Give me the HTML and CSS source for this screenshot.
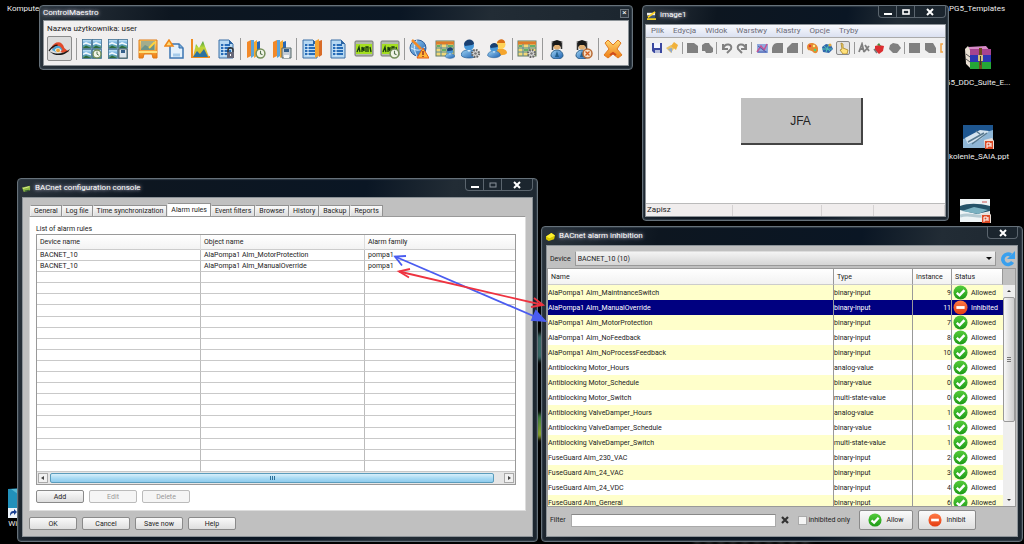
FILE: index.html
```html
<!DOCTYPE html>
<html lang="en">
<head>
<meta charset="utf-8">
<title>Desktop</title>
<link rel="stylesheet" href="styles.css">
</head>
<body>
<svg class="defs" aria-hidden="true">
  <defs>
    <linearGradient id="gBlue" x1="0" y1="0" x2="1" y2="1"><stop offset="0" stop-color="#9fd4f4"/><stop offset="1" stop-color="#1c5fb0"/></linearGradient>
    <linearGradient id="gOrange" x1="0" y1="0" x2="0" y2="1"><stop offset="0" stop-color="#ffd873"/><stop offset="1" stop-color="#ef7d12"/></linearGradient>
    <linearGradient id="gGreen" x1="0" y1="0" x2="0" y2="1"><stop offset="0" stop-color="#55cc3c"/><stop offset="1" stop-color="#1d9a16"/></linearGradient>
    <linearGradient id="gRed" x1="0" y1="0" x2="0" y2="1"><stop offset="0" stop-color="#ff7a45"/><stop offset="1" stop-color="#e43c12"/></linearGradient>
    <linearGradient id="gTile" x1="0" y1="0" x2="0" y2="1"><stop offset="0" stop-color="#d3ecfa"/><stop offset=".5" stop-color="#5aa3da"/><stop offset="1" stop-color="#5f9a68"/></linearGradient>
    <linearGradient id="gFire" x1="0" y1="0" x2="0" y2="1"><stop offset="0" stop-color="#3f9a3e"/><stop offset=".4" stop-color="#b8d73a"/><stop offset="1" stop-color="#f8a428"/></linearGradient>
  </defs>
  <symbol id="ok" viewBox="0 0 16 16"><circle cx="8" cy="8" r="7.5" fill="url(#gGreen)"/><path d="M4 8.4 7 11l5.2-5.6" fill="none" stroke="#fff" stroke-width="2.6"/></symbol>
  <symbol id="no" viewBox="0 0 16 16"><circle cx="8" cy="8" r="7.5" fill="url(#gRed)"/><path d="M3.6 8h8.8" stroke="#fff" stroke-width="3"/></symbol>
  <symbol id="badge" viewBox="0 0 10 10"><circle cx="5" cy="5" r="4" fill="#f1f4e8" stroke="#76905c" stroke-width="1.4"/><path d="M5 2.6v2.6l1.8 1" fill="none" stroke="#54724b"/></symbol>
  <symbol id="gear" viewBox="0 0 10 10"><circle cx="5" cy="5" r="3.2" fill="#ddd" stroke="#666" stroke-width="2" stroke-dasharray="1.5 1"/><circle cx="5" cy="5" r="1.2" fill="#777"/></symbol>
  <symbol id="tile" viewBox="0 0 10 10"><rect x=".4" y=".4" width="9" height="9" fill="url(#gTile)" stroke="#3f6f92" stroke-width=".8"/><path d="M1 4.500 4 3l5 2v1.500L4 5 1 6z" fill="#eef7fc"/><path d="m1 9 3-2.500L9 9z" fill="#2f6a3c"/></symbol>
  <symbol id="tiles" viewBox="0 0 20 20"><use href="#tile" width="10" height="10"/><use href="#tile" x="10" width="10" height="10"/><use href="#tile" y="10" width="10" height="10"/><use href="#tile" x="10" y="10" width="10" height="10"/></symbol>
  <symbol id="book" viewBox="0 0 20 20"><path d="M1 3 5 1v16l-4 2z" fill="#f2892a"/><path d="M5 1h3v16l-3 2z" fill="#5ba4da"/><path d="m8 3 3-2v16l-3 2z" fill="#f5a931"/><path d="m11 3 3-1v16l-3 1z" fill="#2767b5"/></symbol>
  <symbol id="doc" viewBox="0 0 20 20"><path d="M3 1h10l4 4v14H3z" fill="#b7d9f3" stroke="#3b6ea6"/><path d="M5 6h9M5 9h10M5 12h10M5 15h10" stroke="#276cb8" stroke-width="1.8"/><path d="M8 5v12" stroke="#eef7ff"/><path d="M13 1v4h4" fill="#2b65a5"/></symbol>
  <symbol id="lcd" viewBox="0 0 20 20"><rect x="1" y="2" width="18" height="15" rx="1" fill="#b3b9ae" stroke="#777"/><rect x="2" y="5" width="16" height="10" fill="#a4df20"/><path d="m3 13 2-5 1 5M8 13V8l2 4V8M12 13V8h2v5m2-5 1 5" fill="none" stroke="#183a10" stroke-width="1.3"/></symbol>
  <symbol id="user" viewBox="0 0 20 20"><path d="M2 16c0-7 16-7 16 0-1 4-15 4-16 0z" fill="url(#gBlue)" stroke="#245b94" stroke-width=".7"/><circle cx="10" cy="6.5" r="5" fill="#4797d8"/><path d="M5 5C6-1 15-1 15 5l-2 1-7 1z" fill="#193f70"/><path d="m8 11 2 2 2-2z" fill="#d9ecf8"/></symbol>
  <symbol id="agent" viewBox="0 0 20 20"><path d="M4 17c0-8 12-8 12 0-1 4-11 4-12 0z" fill="url(#gBlue)" stroke="#2c5f8a"/><circle cx="10" cy="7" r="3.6" fill="#dfae72"/><path d="M4 3 10 1l6 2-6 2.5zM6 4h8v4l-2-2H8L6 8z" fill="#181818"/><path d="M5.500 4v7M14.500 4v6" stroke="#333" stroke-width="1.5"/><path d="m8 18 2-6 2 6z" fill="#23608e"/></symbol>
  <symbol id="sheet" viewBox="0 0 20 20"><rect x="1" y="2" width="18" height="15" fill="#f0d878" stroke="#607a64"/><path d="M1 4h18" stroke="#dd7a2b" stroke-width="3"/><path d="M1 9h18M1 13h18M6 5v12M12 5v12" stroke="#53889e"/><path d="M2 7h3M7 11h4M13 7h5" stroke="#65af6a" stroke-width="2"/></symbol>
  <symbol id="ppt" viewBox="0 0 12 12"><path d="M1 2 9 0l2 3v8H2z" fill="#e9ded8"/><rect x="2" y="3" width="8" height="8" fill="#dd4b26"/><path d="M4 10V5h3v3H4M8 5v4" fill="none" stroke="#fff"/></symbol>
</svg>

<main class="desktop">
  <span class="smear teal"></span><span class="smear lime"></span><span class="smear grey"></span>
  <div class="shortcut s-komp"><span>Kompute</span></div>
  <div class="shortcut s-templ"><span>PG5_Templates</span></div>
  <div class="shortcut s-suite">
    <svg width="28" height="24" viewBox="0 0 28 24"><path d="m4 1 18-1 5 6H7z" fill="#d78ac7"/><path d="M1 3 4 0l3 6v17l-5-5z" fill="#e9dfd3"/><path d="M6 3h21v6H6z" fill="#a64490"/><path d="M6 9h21v7H6z" fill="#2b36b4"/><path d="M6 16h21v7H6z" fill="#25a637"/><path d="M2 8l4 3M2 13l4 3M2 18l4 4" stroke="#555"/><path d="M15 2h3v21h-3z" fill="#6d4b1f"/><path d="M14 9h5v6h-5z" fill="#d3bf80"/><path d="M16.500 10v9" stroke="#333"/></svg>
    <span>G5_DDC_Suite_E...</span>
  </div>
  <div class="shortcut s-ppt1">
    <svg width="32" height="25" viewBox="0 0 32 25"><rect width="30" height="23" fill="#8fb6d5"/><path d="M0 0h30v5L0 14z" fill="#1e568f"/><path d="M2 13 17 5l9 1-8 8-13 5z" fill="#d4e3ee"/><path d="m5 17 16-9M9 19 24 8M13 6l4 3" stroke="#58798f" stroke-width="1.500"/><use href="#ppt" x="20" y="13" width="12" height="12"/></svg>
    <span>kolenie_SAIA.ppt</span>
  </div>
  <div class="shortcut s-ppt2">
    <svg width="32" height="25" viewBox="0 0 32 25"><rect width="30" height="23" fill="#eef4f6"/><path d="M0 7c8-3 18-3 30 0v5l-13 3L0 11z" fill="#245268"/><path d="m2 12 12-4 14 3-10 4z" fill="#7ab1c1"/><path d="M0 17c9-3 14 1 24 0" fill="none" stroke="#b5cad2" stroke-width="3"/><path d="M22 3h5" stroke="#c55"/><use href="#ppt" x="20" y="13" width="12" height="12"/></svg>
  </div>
  <div class="shortcut s-win">
    <svg width="14" height="30" viewBox="0 0 14 30"><path d="M0 1 14 0v30H0z" fill="#2290ba"/><path d="M3 1h11v8z" fill="#58b7d2"/><rect y="20" width="10" height="10" fill="#edf4fa"/><path d="M2 28c0-4 1-5 4-5v-2l3 3-3 3v-2c-2 0-3 1-4 3z" fill="#183f91"/></svg>
    <span>Win</span>
  </div>

  <section class="window maestro">
    <header class="titlebar"><h1>ControlMaestro</h1><button class="mini-close" aria-label="Close">×</button></header>
    <div class="body">
      <p class="username">Nazwa użytkownika: user</p>
      <div class="tools">
        <button class="pressed" aria-label="Vision"><svg viewBox="0 0 24 20"><path d="M3 9C7 1 15 1 17 9l5 4-7 1z" fill="#e24a2a"/><path d="M4 11c3-6 9-6 11 0l-5 3z" fill="#4aa3d4"/><path d="M7 11c2-3 6-3 7 1l-4 3z" fill="#f4f4ee"/><circle cx="10.500" cy="11.500" r="2" fill="#e8a13a"/><path d="M1 12c7 4 14 4 22-2-4 7-15 9-22 2" fill="#171717"/><path d="M1 12c3-4 6-6 9-6" fill="none" stroke="#171717" stroke-width="1.200"/></svg></button>
        <i class="sep"></i>
        <div class="group">
          <button aria-label="Images"><svg viewBox="0 0 20 20"><use href="#tiles"/><use href="#badge" x="10" y="10" width="10" height="10"/></svg></button>
          <button aria-label="Save images"><svg viewBox="0 0 20 20"><use href="#tiles"/><path d="M11 10h8v9h-8z" fill="#dce6ee" stroke="#566"/><path d="M13 11h4v3h-4z" fill="#345f8a"/></svg></button>
        </div>
        <i class="sep"></i>
        <div class="group">
          <button aria-label="Editor"><svg viewBox="0 0 20 20"><path d="M1 1h18v18h-4l-1-4H6l-1 4H1z" fill="url(#gOrange)" stroke="#df7b17"/><rect x="3" y="2" width="14" height="9" fill="#a3ad8c"/><path d="m3 10 4-4 4 2 5-4v7H3z" fill="#6f9489"/><path d="m11 9 6-6" stroke="#ffd33c" stroke-width="2"/><path d="M1 13h18" stroke="#ffe078" stroke-width="2"/></svg></button>
          <button aria-label="New page"><svg viewBox="0 0 20 20"><path d="M6 5h9l4 4v10H6z" fill="#e4f1fb" stroke="#3b75b3" stroke-width="1.500"/><path d="M15 5v4h4" fill="#79abd7" stroke="#356da8"/><path d="M1 7 5 1l4 6z" fill="#ffdb77" stroke="#ef8618" stroke-width="1.500"/><path d="M9 16h7" stroke="#a5cbea" stroke-width="3"/></svg></button>
          <button aria-label="Chart"><svg viewBox="0 0 20 20"><path d="M2 0v18h18" fill="none" stroke="#ed8b20" stroke-width="2"/><path d="m3 18 3-13 3 4 4-7 6 16z" fill="url(#gFire)"/><path d="m3 18 4-6 3 3 4-5 4 8z" fill="#2a72a0"/></svg></button>
          <button aria-label="Lock report"><svg viewBox="0 0 20 20"><use href="#doc"/><path d="M12 13v-2c0-3 5-3 5 0v2" fill="none" stroke="#333" stroke-width="1.500"/><path d="M11 13h7v6h-7z" fill="#667"/><path d="M14 15h1v2h-1z" fill="#fff"/></svg></button>
        </div>
        <i class="sep"></i>
        <div class="group">
          <button aria-label="History"><svg viewBox="0 0 20 20"><use href="#book"/><use href="#badge" x="9" y="9" width="11" height="11"/></svg></button>
          <button aria-label="Save history"><svg viewBox="0 0 20 20"><use href="#book"/><path d="M10 9h9v10h-9z" fill="#c4ccd6" stroke="#566"/><path d="M12 10h5v3h-5z" fill="#345f8a"/><path d="M12 16h5v3h-5z" fill="#f6f6f6"/></svg></button>
        </div>
        <i class="sep"></i>
        <div class="group">
          <button aria-label="Recipe"><svg viewBox="0 0 20 20"><use href="#doc" x="-2"/><path d="m13 2 4-2v17l-4 2z" fill="#f3a332"/><path d="m17 2 3-1v15l-3 2z" fill="#d96b28"/></svg></button>
          <button aria-label="Report"><svg viewBox="0 0 20 20"><use href="#doc"/></svg></button>
          <button aria-label="Ads"><svg viewBox="0 0 20 20"><use href="#lcd"/></svg></button>
          <button aria-label="Ads timer"><svg viewBox="0 0 20 20"><use href="#lcd"/><use href="#badge" x="9" y="9" width="11" height="11"/></svg></button>
        </div>
        <i class="sep"></i>
        <div class="group">
          <button aria-label="Alarms"><svg viewBox="0 0 20 20"><circle cx="9" cy="9" r="8" fill="url(#gBlue)" stroke="#315f9e"/><path d="M2 9c6 3 9 3 14-1M8 1c-4 6-3 11 0 16" fill="none" stroke="#dceeff"/><path d="m3 1 9 9" stroke="#f18a28" stroke-width="2.500"/><path d="m14 9 6 10H8z" fill="#ffb638" stroke="#e65c14"/><path d="M14 12v4m0 1v1" stroke="#822" stroke-width="1.300"/></svg></button>
          <button aria-label="User table"><svg viewBox="0 0 20 20"><use href="#sheet"/><use href="#user" x="9" y="8" width="12" height="12"/></svg></button>
          <button aria-label="User settings"><svg viewBox="0 0 20 20"><use href="#user" x="-2"/><use href="#gear" x="9" y="9" width="11" height="11"/></svg></button>
          <button aria-label="Users"><svg viewBox="0 0 20 20"><path d="M7 14c0-6 13-6 13 0-1 3-12 3-13 0z" fill="#f5a52d"/><circle cx="14" cy="5.500" r="4.500" fill="#ffd258"/><path d="M10 4c1-5 8-5 8 0z" fill="#d96e17"/><use href="#user" x="-1" y="3" width="16" height="17"/></svg></button>
        </div>
        <i class="sep"></i>
        <button aria-label="Table settings"><svg viewBox="0 0 20 20"><use href="#sheet"/><use href="#gear" x="9" y="9" width="11" height="11"/></svg></button>
        <i class="sep"></i>
        <div class="group">
          <button aria-label="Log in"><svg viewBox="0 0 20 20"><use href="#agent"/></svg></button>
          <button aria-label="Log out"><svg viewBox="0 0 20 20"><use href="#agent" x="-1"/><circle cx="14.500" cy="14.500" r="4.500" fill="#f4e0c8" stroke="#b76a35" stroke-width="1.500"/><path d="m12.500 12.500 4 4m0-4-4 4" stroke="#d45c1d" stroke-width="1.300"/></svg></button>
        </div>
        <i class="sep"></i>
        <button aria-label="Exit"><svg viewBox="0 0 20 20"><path d="m2 4 3-3 5 5 5-5 3 3-4 6 5 6-4 3-5-4-5 4-4-3 5-6z" fill="url(#gOrange)" stroke="#e07a20"/><path d="m7 16 3-2 3 2" fill="none" stroke="#ce4a1e" stroke-width="2"/></svg></button>
      </div>
    </div>
  </section>

  <section class="window image">
    <header class="titlebar">
      <svg class="appicon" viewBox="0 0 10 10"><path d="M0 2h9v3H0z" fill="#eee"/><path d="M1 5h8v3H1z" fill="#3a5277"/><path d="m1 7 8-6" stroke="#ffd323" stroke-width="2"/><path d="M0 8h10v2H0z" fill="#efce20"/></svg>
      <h1>image1</h1>
      <div class="controls"><button aria-label="Minimize"><svg viewBox="0 0 12 10"><path d="M2 6h8v2H2z" fill="#fff"/></svg></button><button aria-label="Maximize"><svg viewBox="0 0 12 10"><rect x="3" y="3" width="6" height="4" fill="none" stroke="#fff" stroke-width="1.600"/></svg></button><button class="x" aria-label="Close"><svg viewBox="0 0 12 10"><path d="m3 2 6 6m0-6L3 8" stroke="#fff" stroke-width="2"/></svg></button></div>
    </header>
    <div class="body">
      <nav class="menu"><a href="#">Plik</a><a href="#">Edycja</a><a href="#">Widok</a><a href="#">Warstwy</a><a href="#">Klastry</a><a href="#">Opcje</a><a href="#">Tryby</a></nav>
      <div class="strip">
        <button aria-label="Save"><svg viewBox="0 0 12 12"><path d="M1 1h10v10H3L1 9z" fill="#3a48a0"/><path d="M3 1h6v5H3z" fill="#f4f6ff"/><path d="M4 8h5v3H4z" fill="#b9c0dd"/></svg></button>
        <button aria-label="Open"><svg viewBox="0 0 12 12"><path d="m0 6 5-3 4 2-4 6z" fill="#e8c469"/><path d="m5 4 3-4 4 3-2 5z" fill="#f1b13a"/><path d="m2 7 4-1v5z" fill="#8fa8cf"/></svg></button>
        <i class="sep"></i>
        <button aria-label="Copy"><svg viewBox="0 0 12 12"><path d="M1 1h7l4 3v7H1z" fill="#808080"/></svg></button>
        <button aria-label="Paste"><svg viewBox="0 0 12 12"><path d="m1 3 3-2h4l1 2 3 3v4l-2 1H5L4 9H1z" fill="#808080"/></svg></button>
        <i class="sep"></i>
        <button aria-label="Undo"><svg viewBox="0 0 12 12"><path d="M2 2v5h5M2 7c2-7 10-5 8 0L6 11" fill="none" stroke="#808080" stroke-width="2"/></svg></button>
        <button aria-label="Redo"><svg viewBox="0 0 12 12"><path d="M10 2v5H5M10 7C8 0 0 2 2 7l4 4" fill="none" stroke="#808080" stroke-width="2"/></svg></button>
        <i class="sep"></i>
        <button aria-label="Picture"><svg viewBox="0 0 12 12"><rect x="1" y="2" width="11" height="9" fill="#90a9dc"/><path d="m1 10 4-6 3 4 3-6" fill="none" stroke="#c65292" stroke-width="1.500"/><path d="m2 4 8 6M2 10h9" stroke="#4961b0"/></svg></button>
        <button aria-label="Group"><svg viewBox="0 0 12 12"><path d="M1 6c1-4 3-5 6-5h5v10H1z" fill="#808080"/></svg></button>
        <button aria-label="Ungroup"><svg viewBox="0 0 12 12"><path d="m1 6 5-5h6v10H1z" fill="#808080"/></svg></button>
        <i class="sep"></i>
        <button aria-label="Palette"><svg viewBox="0 0 12 12"><path d="M1 5c0-6 10-5 11 1s-4 6-5 4-6 0-6-5z" fill="#e68a32"/><circle cx="4" cy="4" r="1.200" fill="#dd3636"/><circle cx="8" cy="4" r="1.200" fill="#fff08a"/><circle cx="9" cy="8" r="1.200" fill="#4d7"/></svg></button>
        <button aria-label="Globe"><svg viewBox="0 0 12 12"><path d="m1 5 4-3 5 1 2 4-4 4-6-1z" fill="#3067ac"/><path d="m3 4 6 5M1 7h10M8 2 5 10" stroke="#51c3b5"/><circle cx="9" cy="3" r="1.500" fill="#e2a842"/></svg></button>
        <button class="on" aria-label="Pointer"><svg viewBox="0 0 12 12"><path d="m4 1 2 1v4l5 2-1 4H6L3 8l2-1z" fill="#ffe17b" stroke="#a78322" stroke-width=".8"/></svg></button>
        <i class="sep"></i>
        <button aria-label="Text"><svg viewBox="0 0 12 12"><path d="m1 10 3-8 2 8M2 7h4m1-4 4 6m0-5L6 10" fill="none" stroke="#808080" stroke-width="1.800"/></svg></button>
        <button aria-label="Event"><svg viewBox="0 0 12 12"><path d="m2 4 4-1 5 1-1 5-4 3-4-4z" fill="#dc2e31"/><path d="m4 3 2-2 2 3z" fill="#468a3d"/><path d="m1 7 3 4" stroke="#777" stroke-width="1.500"/></svg></button>
        <button aria-label="Shape"><svg viewBox="0 0 12 12"><path d="m4 1 5 1 3 4-4 5H4L0 7l1-4z" fill="#808080"/></svg></button>
        <i class="sep"></i>
        <button aria-label="Square"><svg viewBox="0 0 12 12"><path d="M1 1h11v10H1z" fill="#808080"/></svg></button>
        <button aria-label="Stack"><svg viewBox="0 0 12 12"><path d="M1 1h8l3 5v5H5L1 8z" fill="#808080"/></svg></button>
        <button class="cut" aria-label="More"><svg viewBox="0 0 4 12"><path d="M4 2H2v8h2" fill="none" stroke="#efa243" stroke-width="1.500"/></svg></button>
      </div>
      <div class="canvas"><button class="jfa">JFA</button></div>
      <footer class="status"><span>Zapisz</span><span></span><span></span><span></span></footer>
    </div>
  </section>

  <section class="window config">
    <header class="titlebar">
      <svg class="appicon" viewBox="0 0 10 10"><path d="m0 4 9-2v5l-7 2z" fill="#8fbc45"/><path d="m1 5 7-2" stroke="#e5ee8d"/><path d="m3 8 5-1" stroke="#385e34" stroke-width="1.500"/></svg>
      <h1>BACnet configuration console</h1>
      <div class="controls"><button aria-label="Minimize"><svg viewBox="0 0 12 10"><path d="M2 6h8v2H2z" fill="#fff"/></svg></button><button aria-label="Maximize" disabled><svg viewBox="0 0 12 10"><rect x="3" y="3" width="6" height="4" fill="none" stroke="#8c949c"/></svg></button><button class="x" aria-label="Close"><svg viewBox="0 0 12 10"><path d="m3 2 6 6m0-6L3 8" stroke="#fff" stroke-width="2"/></svg></button></div>
    </header>
    <div class="body">
      <div class="tabs" role="tablist"><button role="tab">General</button><button role="tab">Log file</button><button role="tab">Time synchronization</button><button role="tab" class="active" aria-selected="true">Alarm rules</button><button role="tab">Event filters</button><button role="tab">Browser</button><button role="tab">History</button><button role="tab">Backup</button><button role="tab">Reports</button></div>
      <div class="panel">
        <p id="rules-label">List of alarm rules</p>
        <div class="rules-box">
          <table class="rules" aria-labelledby="rules-label">
            <colgroup><col class="c1"><col class="c2"><col></colgroup>
            <thead><tr><th>Device name</th><th>Object name</th><th>Alarm family</th></tr></thead>
            <tbody>
              <tr><td>BACNET_10</td><td>AlaPompa1 Alm_MotorProtection</td><td>pompa1</td></tr>
              <tr><td>BACNET_10</td><td>AlaPompa1 Alm_ManualOverride</td><td>pompa1</td></tr>
              <tr><td></td><td></td><td></td></tr><tr><td></td><td></td><td></td></tr><tr><td></td><td></td><td></td></tr>
              <tr><td></td><td></td><td></td></tr><tr><td></td><td></td><td></td></tr><tr><td></td><td></td><td></td></tr>
              <tr><td></td><td></td><td></td></tr><tr><td></td><td></td><td></td></tr><tr><td></td><td></td><td></td></tr>
              <tr><td></td><td></td><td></td></tr><tr><td></td><td></td><td></td></tr><tr><td></td><td></td><td></td></tr>
              <tr><td></td><td></td><td></td></tr><tr><td></td><td></td><td></td></tr><tr><td></td><td></td><td></td></tr>
              <tr><td></td><td></td><td></td></tr><tr><td></td><td></td><td></td></tr><tr><td></td><td></td><td></td></tr>
            </tbody>
          </table>
          <div class="hscroll"><button aria-label="Scroll left"><svg viewBox="0 0 8 8"><path d="M5 2v4L2 4z" fill="#444"/></svg></button><div class="htrack"><div class="hthumb"><i></i><i></i><i></i></div></div><button aria-label="Scroll right"><svg viewBox="0 0 8 8"><path d="M3 2v4l3-2z" fill="#444"/></svg></button></div>
        </div>
        <div class="buttons"><button class="btn">Add</button><button class="btn" disabled>Edit</button><button class="btn" disabled>Delete</button></div>
      </div>
      <div class="buttons dialog"><button class="btn">OK</button><button class="btn">Cancel</button><button class="btn">Save now</button><button class="btn">Help</button></div>
    </div>
  </section>

  <section class="window alarm">
    <header class="titlebar">
      <svg class="appicon" viewBox="0 0 10 10"><path d="m0 5 6-4 4 3-1 4-6 2-3-2z" fill="#d9c900"/><path d="m0 5 6-4 4 3-6 3z" fill="#fff130"/></svg>
      <h1>BACnet alarm inhibition</h1>
      <div class="controls single"><button class="x" aria-label="Close"><svg viewBox="0 0 12 10"><path d="m3 2 6 6m0-6L3 8" stroke="#fff" stroke-width="2"/></svg></button></div>
    </header>
    <div class="body">
      <div class="device"><label for="device">Device</label>
        <div class="picker"><select id="device"><option>BACNET_10 (10)</option></select><svg viewBox="0 0 6 4"><path d="M0 0h6L3 3z" fill="#111"/></svg></div>
        <button class="refresh" aria-label="Refresh"><svg viewBox="0 0 16 16"><path d="M12.500 11A5.200 5.200 0 1 1 11 4" fill="none" stroke="#39a0ee" stroke-width="3.600"/><path d="M15 0v8H7z" fill="#39a0ee"/></svg></button>
      </div>
      <div class="list">
        <div class="viewport">
        <table class="alarms">
          <colgroup><col><col class="type"><col class="inst"><col class="stat"></colgroup>
          <thead><tr><th>Name</th><th>Type</th><th>Instance</th><th>Status</th></tr></thead>
          <tbody>
            <tr><td>AlaPompa1 Alm_MaintnanceSwitch</td><td>binary-input</td><td>9</td><td><svg><use href="#ok"/></svg>Allowed</td></tr>
            <tr class="selected"><td>AlaPompa1 Alm_ManualOverride</td><td>binary-input</td><td>11</td><td><svg><use href="#no"/></svg>Inhibited</td></tr>
            <tr><td>AlaPompa1 Alm_MotorProtection</td><td>binary-input</td><td>7</td><td><svg><use href="#ok"/></svg>Allowed</td></tr>
            <tr><td>AlaPompa1 Alm_NoFeedback</td><td>binary-input</td><td>8</td><td><svg><use href="#ok"/></svg>Allowed</td></tr>
            <tr><td>AlaPompa1 Alm_NoProcessFeedback</td><td>binary-input</td><td>10</td><td><svg><use href="#ok"/></svg>Allowed</td></tr>
            <tr><td>Antiblocking Motor_Hours</td><td>analog-value</td><td>0</td><td><svg><use href="#ok"/></svg>Allowed</td></tr>
            <tr><td>Antiblocking Motor_Schedule</td><td>binary-value</td><td>0</td><td><svg><use href="#ok"/></svg>Allowed</td></tr>
            <tr><td>Antiblocking Motor_Switch</td><td>multi-state-value</td><td>0</td><td><svg><use href="#ok"/></svg>Allowed</td></tr>
            <tr><td>Antiblocking ValveDamper_Hours</td><td>analog-value</td><td>1</td><td><svg><use href="#ok"/></svg>Allowed</td></tr>
            <tr><td>Antiblocking ValveDamper_Schedule</td><td>binary-value</td><td>1</td><td><svg><use href="#ok"/></svg>Allowed</td></tr>
            <tr><td>Antiblocking ValveDamper_Switch</td><td>multi-state-value</td><td>1</td><td><svg><use href="#ok"/></svg>Allowed</td></tr>
            <tr><td>FuseGuard Alm_230_VAC</td><td>binary-input</td><td>2</td><td><svg><use href="#ok"/></svg>Allowed</td></tr>
            <tr><td>FuseGuard Alm_24_VAC</td><td>binary-input</td><td>3</td><td><svg><use href="#ok"/></svg>Allowed</td></tr>
            <tr><td>FuseGuard Alm_24_VDC</td><td>binary-input</td><td>4</td><td><svg><use href="#ok"/></svg>Allowed</td></tr>
            <tr><td>FuseGuard Alm_General</td><td>binary-input</td><td>6</td><td><svg><use href="#ok"/></svg>Allowed</td></tr>
          </tbody>
        </table>
        </div>
        <div class="vscroll"><button aria-label="Scroll up"><svg viewBox="0 0 8 8"><path d="M2 5h4L4 3z" fill="#333"/></svg></button><div class="vtrack"><div class="vthumb"><i></i><i></i><i></i></div></div><button aria-label="Scroll down"><svg viewBox="0 0 8 8"><path d="M2 3h4L4 5z" fill="#333"/></svg></button></div>
      </div>
      <div class="filter">
        <label for="filter">Filter</label><input id="filter" type="text">
        <button class="clear" aria-label="Clear filter"><svg viewBox="0 0 8 8"><path d="m1 1 6 6m0-6L1 7" stroke="#333" stroke-width="2.200"/></svg></button>
        <label class="check"><input type="checkbox">inhibited only</label>
        <button class="btn big"><svg><use href="#ok"/></svg>Allow</button>
        <button class="btn big"><svg><use href="#no"/></svg>Inhibit</button>
      </div>
    </div>
  </section>

  <svg class="arrows" width="160" height="76" viewBox="390 250 160 76" aria-hidden="true">
    <g fill="none" stroke="#4a5cf0" stroke-width="1.800"><path d="M395 256.500 545 321"/><path d="m406 256-11 .5 7 9"/><path d="m536 311 9 10-13-1z" fill="#4a5cf0"/></g>
    <g fill="none" stroke="#ee3340" stroke-width="1.800"><path d="M399 271.500 543 305"/><path d="m410 269-11 2.500 10 6"/><path d="m534 298 9 7-12 2"/></g>
  </svg>
</main>
</body>
</html>
```
FILE: styles.css
```css
* { box-sizing: border-box; }
body { margin: 0; background: #000; color: #222; font: 7px/10px Roboto, "Noto Sans", sans-serif; }
p, h1 { margin: 0; font: inherit; }
button, input, select { font: inherit; color: inherit; margin: 0; padding: 0; border: 0; background: none; border-radius: 0; }
button { display: flex; align-items: center; justify-content: center; white-space: nowrap; }
svg { display: block; flex: none; }
.defs { position: absolute; width: 0; height: 0; }

.desktop { position: relative; width: 100%; min-width: 1024px; height: 100vh; min-height: 544px; overflow: hidden; background: #000; }
.shortcut { position: absolute; display: flex; flex-direction: column; align-items: center; gap: 8px; color: #eee; font-size: 8px; white-space: nowrap; }
.s-komp { left: 7px; top: 4px; }
.s-templ { left: 949px; top: 4px; }
.s-suite { left: 945px; top: 46px; }
.s-ppt1 { left: 949px; top: 125px; gap: 2px; }
.s-ppt2 { left: 960px; top: 199px; }
.s-win { left: 8px; top: 488px; gap: 1px; }
.smear { position: absolute; filter: blur(2px); }
.teal { left: 536px; top: 334px; width: 8px; height: 26px; background: #3b6f6c; }
.lime { left: 536px; top: 414px; width: 8px; height: 24px; background: linear-gradient(#357f45, #a4b92e); }
.grey { left: 694px; top: 539px; width: 120px; height: 5px; background: repeating-linear-gradient(90deg, #333 0 6px, #0a0a0a 6px 12px); }

.window { position: absolute; display: flex; flex-direction: column; padding: 0 4px 4px; border: 1px solid #66717a; border-radius: 4px; background: linear-gradient(100deg, #2b343c, #0d1620 22%, #0a1624 60%, #222c35 75%, #1b252e); box-shadow: inset 0 0 1px 1px #303b45; }
.maestro { left: 39px; top: 5px; width: 594px; padding: 0 3px 3px; }
.image { left: 642px; top: 5px; width: 307px; height: 216px; padding: 0 2px 3px; }
.config { left: 17px; top: 178px; width: 521px; height: 364px; }
.alarm { left: 541px; top: 226px; width: 482px; height: 316px; }
.titlebar { display: flex; align-items: center; gap: 4px; height: 18px; flex: none; color: #fff; font-size: 8px; }
.titlebar h1 { text-shadow: 0 0 3px #aab, 0 0 5px #aab; flex: 1; }
.maestro .titlebar { height: 14px; }
.image .titlebar { padding-left: 2px; }
.appicon { width: 9px; height: 9px; }
.controls { display: flex; align-self: flex-start; height: 12px; border: 1px solid #5b656e; border-top: 0; border-radius: 0 0 4px 4px; background: #1b252e; }
.controls button { width: 18px; border-right: 1px solid #5b656e; }
.controls button.x { width: 30px; border: 0; }
.controls svg { width: 12px; height: 10px; }
.mini-close { width: 9px; height: 9px; border: 1px solid #69737c; background: #303942; color: #fff; font-size: 8px; }
.body { flex: 1; min-height: 0; display: flex; flex-direction: column; background: #f0f0f0; border: 1px solid #8c9297; }

.maestro .body { background: #f1efef; padding: 2px 5px 4px 3px; gap: 1px; }
.username { line-height: 12px; }
.username, .menu, .status { font-size: 8px; }
.tools { display: flex; align-items: center; justify-content: space-between; height: 25px; }
.tools svg { width: 20px; height: 20px; }
.tools .pressed { width: 25px; height: 25px; border: 1px solid #8b8b8b; border-radius: 2px; background: #dcdcdc; }
.tools .pressed svg { width: 23px; }
.group { display: flex; gap: 6px; }
.sep { width: 1px; height: 22px; background: #999; }

.menu { display: flex; gap: 9px; height: 13px; align-items: center; padding-left: 5px; background: linear-gradient(#f8f9fd, #dbe1f1); border-bottom: 1px solid #aaa; }
.menu a { color: #6b6b78; text-decoration: none; }
.strip { display: flex; align-items: center; justify-content: space-between; height: 20px; padding: 0 2px 0 5px; background: #f0f0f0; }
.strip svg { width: 12px; height: 12px; }
.strip .sep { height: 12px; }
.strip .on { border: 1px solid #888; border-radius: 2px; background: #e2e2e2; }
.strip .cut, .strip .cut svg { width: 4px; }
.canvas { flex: 1; display: flex; justify-content: center; align-items: flex-start; padding: 40px 0 0 12px; background: #fff; }
.jfa { width: 122px; height: 47px; background: #c0c0c0; border-right: 2px solid #444; border-bottom: 2px solid #444; font: 12px/16px "Liberation Sans", Arial, sans-serif; }
.status { display: grid; grid-template-columns: 87px 89px 52px 1fr; height: 13px; align-items: center; background: #f0eded; border-top: 1px solid #bbb; }
.status span { height: 11px; padding-left: 1px; border-right: 1px solid #d5d2d2; }

.config .body, .alarm .body { background: #c0c0c0; }
.config .body { padding: 5px 6px 7px 6px; }
.tabs { display: flex; align-items: flex-end; height: 13px; padding-left: 1px; }
.tabs button { height: 11px; padding: 0 3px; border: 1px solid #929292; border-left-color: #eee; border-bottom: 0; background: linear-gradient(#fafafa, #dcdcdc); }
.tabs .active { height: 13px; background: #fff; }
.panel { flex: 1; display: flex; flex-direction: column; padding: 7px 9px 7px 6px; background: #fff; border: 1px solid #ddd; border-top-color: #999; }
.rules-box { border: 1px solid #999; background: #fff; }
table { border-collapse: separate; border-spacing: 0; table-layout: fixed; width: 100%; }
th { font-weight: 400; text-align: left; }
th, td { padding: 0; white-space: nowrap; overflow: hidden; }
.rules { height: 237px; }
.rules .c1 { width: 164px; }
.rules .c2 { width: 164px; }
.rules thead tr { height: 15px; }
.rules th { background: linear-gradient(#fff, #f3f3f3); border-bottom: 1px solid #ccc; border-right: 1px solid #ddd; padding-left: 3px; }
.rules td { line-height: 9px; height: 11px; border-bottom: 1px solid #c9c9c9; border-right: 1px solid #bbb; padding-left: 3px; }
.rules tr > :last-child { border-right: 0; }
.hscroll { display: flex; height: 12px; padding: 1px; background: #e6e6e6; }
.hscroll button { width: 10px; border: 1px solid #aaa; background: #f1f1f1; }
.hscroll svg, .vscroll svg { width: 8px; height: 8px; }
.htrack { flex: 1; padding: 0 10px 0 2px; }
.hthumb { display: flex; gap: 1px; align-items: center; justify-content: center; height: 10px; border: 1px solid #5a9cbc; border-radius: 2px; background: linear-gradient(#d7effb, #a3d8f3 60%, #8fcbed); }
.hthumb i { width: 1px; height: 4px; background: #2b709a; }
.buttons { display: flex; gap: 5px; padding-top: 5px; }
.dialog { padding-top: 6px; }
.btn { width: 48px; height: 13px; border: 1px solid #8a8a8a; border-radius: 2px; background: linear-gradient(#fafafa, #dedede); }
.btn:disabled { color: #999; border-color: #bbb; background: #f5f5f5; }

.alarm .controls { width: 31px; }
.alarm .body { padding: 5px 1px 6px 0; }
.device { display: flex; align-items: center; height: 15px; padding-left: 3px; gap: 4px; }
.picker { position: relative; flex: 1; }
.picker select { display: block; width: 100%; height: 15px; padding-left: 2px; appearance: none; border: 1px solid #999; border-top-color: #ddd; background: linear-gradient(#f4f4f4, #d5d5d5); }
.picker svg { position: absolute; right: 4px; top: 6px; width: 6px; height: 4px; }
.refresh, .refresh svg { width: 16px; height: 16px; }
.list { flex: 1; min-height: 0; display: flex; margin-top: 2px; border: 1px solid #999; }
.viewport { flex: 1; overflow: hidden; background: #fff; }
.alarms .type { width: 79px; }
.alarms .inst { width: 39px; }
.alarms .stat { width: 51px; }
.alarms th { height: 16px; padding-left: 3px; border-right: 1px solid #999; border-bottom: 1px solid #ccc; background: linear-gradient(#fff, #f2f2f2); }
.alarms td { height: 15px; border-right: 1px solid #999; }
.alarms tbody tr:nth-child(odd) { background: #ffffcb; }
.alarms tr.selected { background: #000080; color: #fff; }
.alarms td:nth-child(3) { text-align: right; }
.alarms td:last-child { display: flex; align-items: center; gap: 3px; padding-left: 1px; border: 0; }
.alarms td svg { width: 15px; height: 15px; }
.vscroll { display: flex; flex-direction: column; width: 12px; padding-top: 16px; background: linear-gradient(#c0c0c0 16px, #eee 16px); }
.vscroll button { width: 12px; height: 12px; }
.vtrack { flex: 1; padding-bottom: 72px; }
.vthumb { height: 100%; display: flex; flex-direction: column; gap: 1px; align-items: center; justify-content: center; border: 1px solid #999; border-radius: 2px; background: linear-gradient(90deg, #f8f8f8, #ccc); }
.vthumb i { width: 4px; height: 1px; background: #777; }
.filter { display: flex; align-items: center; height: 23px; padding: 3px 40px 0 3px; gap: 5px; }
.filter input[type="text"] { flex: 1; min-width: 0; height: 13px; border: 1px solid #aaa; border-top-color: #888; background: #fff; }
.clear svg { width: 8px; height: 8px; }
.check { display: flex; align-items: center; gap: 2px; margin: 0 4px; white-space: nowrap; }
.check input { appearance: none; width: 9px; height: 9px; border: 1px solid #aaa; background: #f5f5f5; }
.big { width: 54px; height: 20px; gap: 4px; }
.big:last-child { width: 58px; }
.big svg { width: 14px; height: 14px; }
.arrows { position: absolute; left: 390px; top: 250px; pointer-events: none; }
```
